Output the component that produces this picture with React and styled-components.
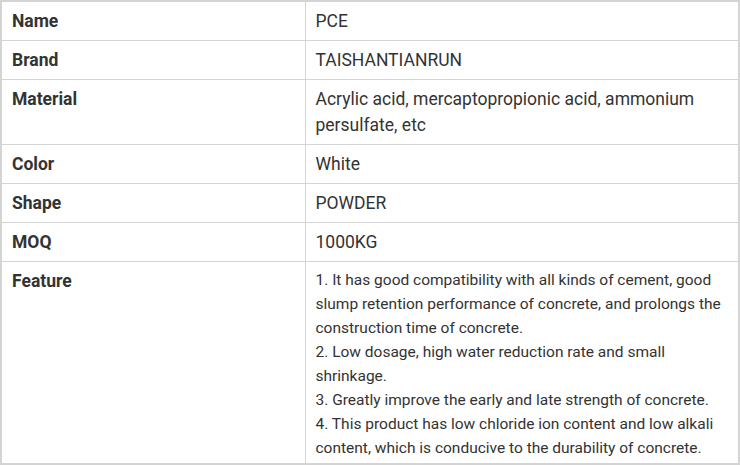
import React from "react";
import styled, { createGlobalStyle } from "styled-components";

const Global = createGlobalStyle`
  html, body { margin: 0; padding: 0; background: #fff; }
  body { font-family: Roboto, "Noto Sans", sans-serif; color: #333; }
`;

const Table = styled.table`
  width: 740px;
  border-collapse: collapse;
  border: 2px solid #d4d4d4;
  table-layout: fixed;
`;

const Row = styled.tr``;

const Label = styled.th`
  box-sizing: border-box;
  width: 304px;
  text-align: left;
  vertical-align: top;
  font-weight: 700;
  font-size: 17.5px;
  line-height: 26px;
  padding: 6px 10px;
  border: 1px solid #d4d4d4;
  color: #333;
`;

const Value = styled.td`
  vertical-align: top;
  font-weight: 400;
  font-size: ${(p) => (p.$small ? "15.5px" : "17.5px")};
  line-height: ${(p) => (p.$small ? "24px" : "26px")};
  padding: ${(p) => (p.$small ? "6px 10px 3px" : "6px 10px")};
  border: 1px solid #d4d4d4;
  color: #333;
`;

const rows = [
  ["Name", "PCE"],
  ["Brand", "TAISHANTIANRUN"],
  ["Material", "Acrylic acid, mercaptopropionic acid, ammonium persulfate, etc"],
  ["Color", "White"],
  ["Shape", "POWDER"],
  ["MOQ", "1000KG"],
];

const features = [
  "1. It has good compatibility with all kinds of cement, good slump retention performance of concrete, and prolongs the construction time of concrete.",
  "2. Low dosage, high water reduction rate and small shrinkage.",
  "3. Greatly improve the early and late strength of concrete.",
  "4. This product has low chloride ion content and low alkali content, which is conducive to the durability of concrete.",
];

export default function App() {
  return (
    <>
      <Global />
      <Table>
        <tbody>
          {rows.map(([k, v]) => (
            <Row key={k}>
              <Label>{k}</Label>
              <Value>{v}</Value>
            </Row>
          ))}
          <Row>
            <Label>Feature</Label>
            <Value $small>
              {features.map((f, i) => (
                <React.Fragment key={i}>
                  {f}
                  {i < features.length - 1 && <br />}
                </React.Fragment>
              ))}
            </Value>
          </Row>
        </tbody>
      </Table>
    </>
  );
}
